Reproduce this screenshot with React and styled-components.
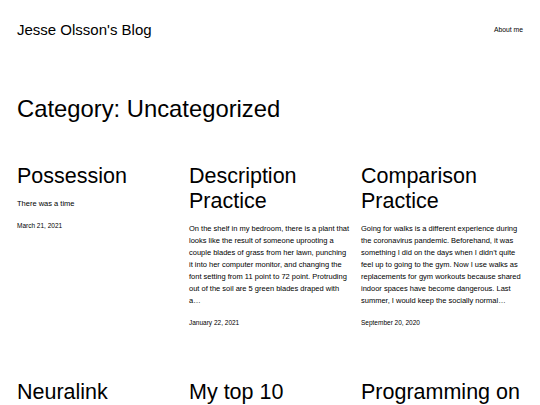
import React from "react";
import styled, { createGlobalStyle } from "styled-components";

const posts = [
    {
        title: "Possession",
        excerpt: "There was a time",
        date: "March 21, 2021",
    },
    {
        title: "Description Practice",
        excerpt:
            "On the shelf in my bedroom, there is a plant that looks like the result of someone uprooting a couple blades of grass from her lawn, punching it into her computer monitor, and changing the font setting from 11 point to 72 point. Protruding out of the soil are 5 green blades draped with a…",
        date: "January 22, 2021",
    },
    {
        title: "Comparison Practice",
        excerpt:
            "Going for walks is a different experience during the coronavirus pandemic. Beforehand, it was something I did on the days when I didn’t quite feel up to going to the gym. Now I use walks as replacements for gym workouts because shared indoor spaces have become dangerous. Last summer, I would keep the socially normal…",
        date: "September 20, 2020",
    },
    { title: "Neuralink", excerpt: "", date: "" },
    { title: "My top 10", excerpt: "", date: "" },
    { title: "Programming on", excerpt: "", date: "" },
];

const App = () => {
    return (
        <>
            <GlobalStyle />
            <Page>
                <Header>
                    <SiteTitle href='#'>Jesse Olsson's Blog</SiteTitle>
                    <NavLink href='#'>About me</NavLink>
                </Header>
                <ArchiveTitle>Category: Uncategorized</ArchiveTitle>
                <PostGrid>
                    {posts.map((post) => (
                        <Post key={post.title}>
                            <PostTitle>{post.title}</PostTitle>
                            {post.excerpt && <Excerpt>{post.excerpt}</Excerpt>}
                            {post.date && <PostDate>{post.date}</PostDate>}
                        </Post>
                    ))}
                </PostGrid>
            </Page>
        </>
    );
};

export default App;

const GlobalStyle = createGlobalStyle`
    html, body {
        margin: 0;
        padding: 0;
        background: #ffffff;
    }
    body {
        font-family: "Liberation Sans", Arial, sans-serif;
        color: #000000;
    }
`;

const Page = styled.div`
    padding: 21px 17px 0;
    overflow: hidden;
`;

const Header = styled.header`
    display: flex;
    justify-content: space-between;
    align-items: center;
`;

const SiteTitle = styled.a`
    font-size: 15px;
    line-height: 17px;
    color: #000;
    text-decoration: none;
`;

const NavLink = styled.a`
    font-size: 6.8px;
    line-height: 10px;
    color: #000;
    text-decoration: none;
`;

const ArchiveTitle = styled.h1`
    margin: 57px 0 0;
    font-size: 23.8px;
    line-height: 27.6px;
    font-weight: 400;
`;

const PostGrid = styled.div`
    display: grid;
    grid-template-columns: repeat(3, 1fr);
    column-gap: 10px;
    row-gap: 52px;
    margin-top: 41px;
`;

const Post = styled.article`
    display: flex;
    flex-direction: column;
    min-width: 0;
`;

const PostTitle = styled.h2`
    margin: 0;
    font-size: 21.5px;
    line-height: 25.3px;
    font-weight: 400;
`;

const Excerpt = styled.p`
    margin: 9px 0 0;
    font-size: 7.5px;
    line-height: 12px;
    color: #000;
`;

const PostDate = styled.div`
    margin-top: 11px;
    font-size: 6.5px;
    line-height: 10px;
    color: #000;
`;
